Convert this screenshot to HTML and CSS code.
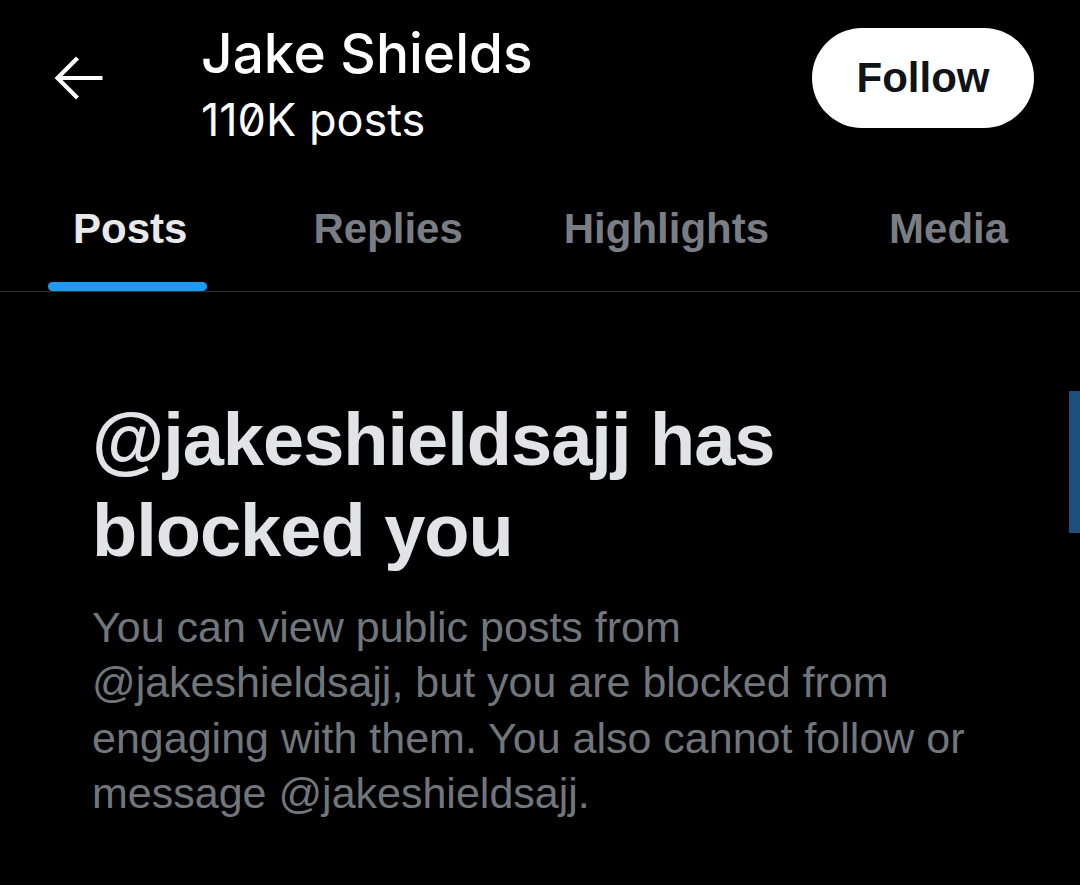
FILE: index.html
```html
<!DOCTYPE html>
<html lang="en">
<head>
<meta charset="utf-8">
<title>Jake Shields</title>
<link rel="stylesheet" href="styles.css">
</head>
<body>
<div class="screen">
  <header class="topbar">
    <button class="back" aria-label="Back">
      <svg width="50" height="44" viewBox="0 0 50 44" aria-hidden="true">
        <path d="M23.5 2 L3.5 22 L23.5 42 M3.5 22 H48.5" fill="none" stroke="#ffffff" stroke-width="4.2" stroke-linejoin="miter"/>
      </svg>
    </button>
    <div class="title">
      <div class="name">Jake Shields</div>
      <div class="count">110K posts</div>
    </div>
    <button class="follow">Follow</button>
  </header>

  <nav class="tabs">
    <div class="tab active">Posts</div>
    <div class="tab tab-replies">Replies</div>
    <div class="tab tab-highlights">Highlights</div>
    <div class="tab tab-media">Media</div>
  </nav>

  <main class="blocked">
    <h1 class="blocked-title">@jakeshieldsajj has blocked you</h1>
    <p class="blocked-text">You can view public posts from @jakeshieldsajj, but you are blocked from engaging with them. You also cannot follow or message @jakeshieldsajj.</p>
  </main>

  <div class="scroll-thumb"></div>
</div>
</body>
</html>
```

FILE: styles.css
```css
* {
  box-sizing: border-box;
}

html,
body {
  margin: 0;
  padding: 0;
  background: #000000;
}

.screen {
  position: relative;
  width: 1080px;
  height: 885px;
  overflow: hidden;
  background: #000000;
  font-family: "Liberation Sans", Arial, sans-serif;
}

/* Top bar */
.topbar {
  display: flex;
  align-items: flex-start;
  height: 160px;
  padding: 21px 46px 0 54px;
}

.back {
  display: flex;
  margin: 35px 0 0 0;
  padding: 0;
  border: 0;
  background: transparent;
  width: 50px;
  height: 44px;
}

.title {
  flex: 1;
  margin-left: 97px;
  color: #ffffff;
}

.name {
  font-family: Inter, "Liberation Sans", sans-serif;
  font-weight: 500;
  font-size: 55px;
  line-height: 64px;
}

.count {
  margin-top: 7px;
  font-family: Inter, "Liberation Sans", sans-serif;
  font-weight: 400;
  font-size: 45px;
  line-height: 56px;
  font-feature-settings: "zero" 1;
}

.follow {
  margin-top: 7px;
  width: 222px;
  height: 100px;
  border: 0;
  border-radius: 50px;
  background: #ffffff;
  color: #0f1419;
  font-family: "Liberation Sans", Arial, sans-serif;
  font-weight: 700;
  font-size: 42px;
  padding: 0;
}

/* Tabs */
.tabs {
  display: flex;
  justify-content: flex-start;
  padding: 45px 0 0 73px;
  border-bottom: 1px solid #2f3336;
}

.tab {
  position: relative;
  padding-bottom: 38px;
  font-weight: 700;
  font-size: 42px;
  line-height: 48px;
  color: #797e84;
}

.tab-replies {
  margin-left: 126px;
}

.tab-highlights {
  margin-left: 101px;
}

.tab-media {
  margin-left: 120px;
}

.tab.active {
  color: #e7e9ea;
}

.tab.active::after {
  content: "";
  position: absolute;
  left: -25px;
  right: -20px;
  bottom: 0;
  height: 9px;
  border-radius: 5px;
  background: #1d9bf0;
}

/* Blocked notice */
.blocked {
  padding: 0 80px 0 92px;
}

.blocked-title {
  margin: 102px 0 0 0;
  font-weight: 700;
  font-size: 74px;
  line-height: 91px;
  letter-spacing: -1px;
  color: #e1e3e4;
}

.blocked-text {
  margin: 24px 0 0 0;
  font-weight: 400;
  font-size: 43px;
  line-height: 55.4px;
  color: #71767b;
}

.scroll-thumb {
  position: absolute;
  right: 0;
  top: 391px;
  width: 11px;
  height: 142px;
  background: #1c4f7d;
}
```
